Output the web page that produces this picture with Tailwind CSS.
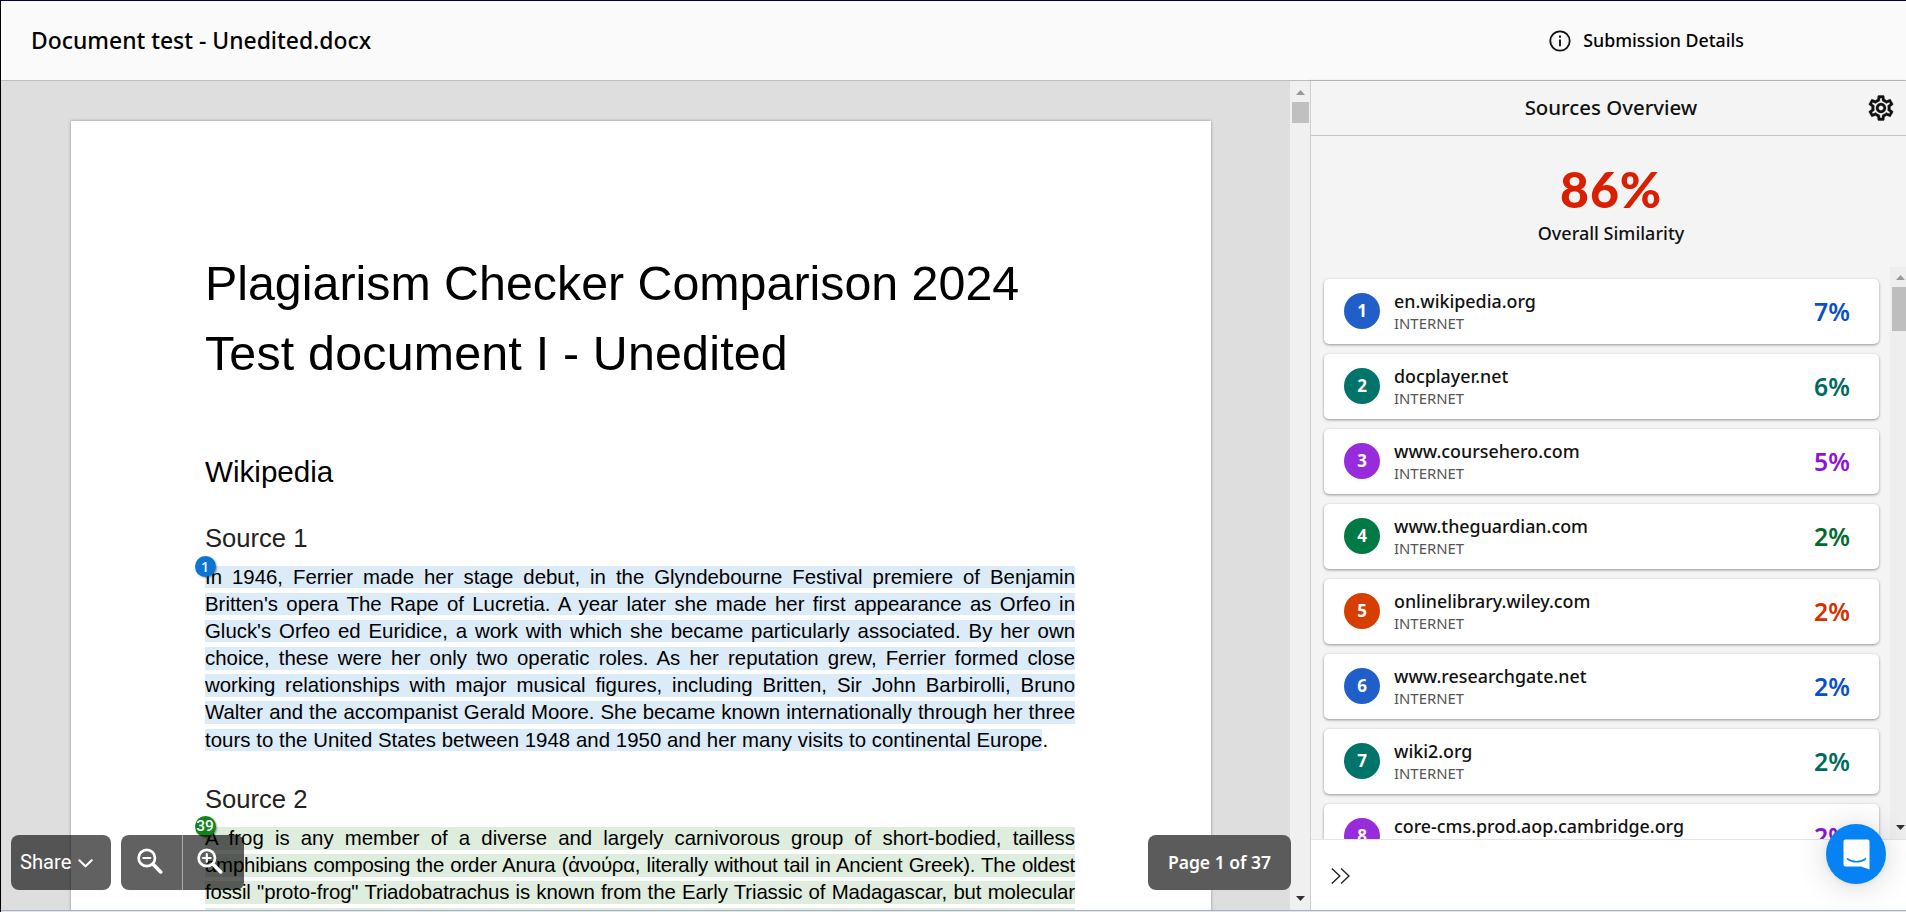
<!DOCTYPE html>
<html lang="en">
<head>
<meta charset="utf-8">
<title>Document test - Unedited.docx</title>
<script src="https://cdn.jsdelivr.net/npm/@tailwindcss/browser@4"></script>
</head>
<body class="h-screen overflow-hidden bg-[#fafafa] font-['Noto_Sans',sans-serif] text-[#111]">
<div class="flex h-[912px] w-[1906px] flex-col border-t border-l border-t-[#00003c] border-l-black">
  <header class="flex h-20 shrink-0 items-center justify-between border-b border-[#bdbdbd] bg-[#fafafa] pl-[30px] pr-[162px] text-black">
    <h1 class="pt-0.5 text-[22.9px] font-medium">Document test - Unedited.docx</h1>
    <div class="flex items-center gap-[12px]">
      <svg class="size-[22px]" viewBox="0 0 22 22" fill="none" stroke="#111"><circle cx="11" cy="11" r="9.7" stroke-width="1.8"/><path d="M11 9.6v6.6M11 5.6v2.2" stroke-width="1.9"/></svg>
      <span class="text-[17.8px] font-medium">Submission Details</span>
    </div>
  </header>

  <main class="flex h-[829px] shrink-0">
    <section class="relative flex w-[1309px] shrink-0 overflow-hidden bg-[#dedede]">
      <div class="w-[1289px] pl-[70px] pt-10">
        <article class="h-[900px] w-[1140px] bg-white pl-[134px] pr-[136px] pt-[127px] font-['Liberation_Sans',sans-serif] text-black shadow-[0_0_3px_rgba(0,0,0,0.35)]">
          <h2 class="whitespace-nowrap text-[48.35px] leading-[70px]">Plagiarism Checker Comparison 2024<br><span class="tracking-[0.2px]">Test document I - Unedited</span></h2>
          <h3 class="mt-[67px] text-[29.6px] leading-[34px]">Wikipedia</h3>
          <h4 class="mt-[34px] text-[25.6px] leading-[30px] text-[#222]">Source 1</h4>
          <div class="relative mt-[13px] flex flex-col gap-[4.8px] whitespace-nowrap text-[20.4px] leading-[22.3px]">
            <p class="bg-[#dbebf8] [text-align-last:justify]">In 1946, Ferrier made her stage debut, in the Glyndebourne Festival premiere of Benjamin</p>
            <p class="bg-[#dbebf8] [text-align-last:justify]">Britten's opera The Rape of Lucretia. A year later she made her first appearance as Orfeo in</p>
            <p class="bg-[#dbebf8] [text-align-last:justify]">Gluck's Orfeo ed Euridice, a work with which she became particularly associated. By her own</p>
            <p class="bg-[#dbebf8] [text-align-last:justify]">choice, these were her only two operatic roles. As her reputation grew, Ferrier formed close</p>
            <p class="bg-[#dbebf8] [text-align-last:justify]">working relationships with major musical figures, including Britten, Sir John Barbirolli, Bruno</p>
            <p class="bg-[#dbebf8] [text-align-last:justify]">Walter and the accompanist Gerald Moore. She became known internationally through her three</p>
            <p class="flex tracking-[0.035px]"><span class="bg-[#dbebf8]">tours to the United States between 1948 and 1950 and her many visits to continental Europe</span>.</p>
            <span class="absolute -left-[10.5px] -top-[10.5px] flex size-[21px] items-center justify-center rounded-full bg-[#0b75d1] font-['Noto_Sans',sans-serif] text-[15px] font-medium text-white shadow-[1px_1px_2px_rgba(0,0,0,0.4)]">1</span>
          </div>
          <h4 class="mt-[33px] text-[25.6px] leading-[30px] text-[#222]">Source 2</h4>
          <div class="relative mt-[13px] flex flex-col gap-[4.2px] whitespace-nowrap text-[20.4px] leading-[22.9px]">
            <p class="bg-[#dfedde] [text-align-last:justify]">A frog is any member of a diverse and largely carnivorous group of short-bodied, tailless</p>
            <p class="bg-[#dfedde] tracking-[-0.22px] [text-align-last:justify]">amphibians composing the order Anura (ἀνούρα, literally without tail in Ancient Greek). The oldest</p>
            <p class="bg-[#dfedde] tracking-[-0.12px] [text-align-last:justify]">fossil "proto-frog" Triadobatrachus is known from the Early Triassic of Madagascar, but molecular</p>
            <p class="h-5 bg-[#dfedde]"></p>
            <span class="absolute -left-[10.5px] -top-[10.5px] flex size-[21px] items-center justify-center rounded-full bg-[#12821a] font-[Roboto,sans-serif] text-[15.5px] font-medium text-white shadow-[1px_1px_2px_rgba(0,0,0,0.4)]">39</span>
          </div>
        </article>
      </div>

      <div class="absolute right-0 top-0 flex h-full w-5 flex-col items-center bg-[#f0f0f0]">
        <svg class="mt-[9px] h-[5px] w-[9px]" viewBox="0 0 9 5"><path d="M4.5 0 9 5H0z" fill="#999"/></svg>
        <div class="mt-[7px] h-[21px] w-[17px] bg-[#c0c0c0]"></div>
        <svg class="mb-[9px] mt-auto h-[5px] w-[9px]" viewBox="0 0 9 5"><path d="M4.5 5 9 0H0z" fill="#333"/></svg>
      </div>

      <div class="absolute bottom-5 left-2.5 flex h-[55px] w-[100px] items-center gap-[7px] rounded-[8px] bg-black/62 pl-[9px] text-white">
        <span class="font-[Roboto,sans-serif] text-[20.2px]">Share</span>
        <svg class="mt-0.5 h-[9px] w-[15px]" viewBox="0 0 15 9" fill="none" stroke="#fff" stroke-width="2.1" stroke-linecap="round" stroke-linejoin="round"><path d="m1.3 1.3 6.2 6 6.2-6"/></svg>
      </div>
      <div class="absolute bottom-5 left-[120px] flex h-[55px] w-[123px] rounded-[8px] bg-black/62">
        <div class="flex w-[62px] items-center border-r border-[#aaa] pb-[3px] pl-4">
          <svg class="size-[26px]" viewBox="0 0 26 26" fill="none" stroke="#fff" stroke-linecap="round"><circle cx="9.8" cy="10" r="8.2" stroke-width="2.7"/><path d="m16.3 16.5 7.4 7.4" stroke-width="3.6"/><path d="M6.3 10h7" stroke-width="2.2"/></svg>
        </div>
        <div class="flex w-[61px] items-center pb-[3px] pl-[14px]">
          <svg class="size-[26px]" viewBox="0 0 26 26" fill="none" stroke="#fff" stroke-linecap="round"><circle cx="9.8" cy="10" r="8.2" stroke-width="2.7"/><path d="m16.3 16.5 7.4 7.4" stroke-width="3.6"/><path d="M6 10h7.6M9.8 6.2v7.6" stroke-width="2.2"/></svg>
        </div>
      </div>
      <div class="absolute bottom-5 right-[19px] flex h-[55px] w-[143px] items-center justify-center rounded-[8px] bg-[#5b5b5b] text-[17.5px] font-semibold text-white">Page 1 of 37</div>
    </section>

    <aside class="flex w-[596px] flex-col border-l border-[#cfcfcf] bg-[#f4f4f4] shadow-[-1px_0_3px_rgba(0,0,0,0.15)]">
      <div class="relative flex h-[55px] shrink-0 items-center justify-center border-b border-[#c4c4c4] pb-0.5 pl-[5px]">
        <h2 class="text-[20.4px] font-medium">Sources Overview</h2>
        <svg class="absolute right-[10px] top-[12px] size-[30px]" viewBox="0 0 24 24" fill="#111" stroke="#111" stroke-width="0.3"><path d="M19.43 12.98c.04-.32.07-.64.07-.98s-.03-.66-.07-.98l2.11-1.65c.19-.15.24-.42.12-.64l-2-3.46c-.09-.16-.26-.25-.44-.25-.06 0-.12.01-.17.03l-2.49 1c-.52-.4-1.08-.73-1.69-.98l-.38-2.65C14.46 2.18 14.25 2 14 2h-4c-.25 0-.46.18-.49.42l-.38 2.65c-.61.25-1.17.59-1.69.98l-2.49-1c-.06-.02-.12-.03-.18-.03-.17 0-.34.09-.43.25l-2 3.46c-.13.22-.07.49.12.64l2.11 1.65c-.04.32-.07.65-.07.98s.03.66.07.98l-2.11 1.65c-.19.15-.24.42-.12.64l2 3.46c.09.16.26.25.44.25.06 0 .12-.01.17-.03l2.49-1c.52.4 1.08.73 1.69.98l.38 2.65c.03.24.24.42.49.42h4c.25 0 .46-.18.49-.42l.38-2.65c.61-.25 1.17-.59 1.69-.98l2.49 1c.06.02.12.03.18.03.17 0 .34-.09.43-.25l2-3.46c.12-.22.07-.49-.12-.64l-2.11-1.65zm-1.98-1.71c.04.31.05.52.05.73s-.02.43-.05.73l-.14 1.13.89.7 1.08.84-.7 1.21-1.27-.51-1.04-.42-.9.68c-.43.32-.84.56-1.25.73l-1.06.43-.16 1.13-.2 1.35h-1.4l-.19-1.35-.16-1.13-1.06-.43c-.43-.18-.83-.41-1.23-.71l-.91-.7-1.06.43-1.27.51-.7-1.21 1.08-.84.89-.7-.14-1.13c-.03-.31-.05-.54-.05-.74s.02-.43.05-.73l.14-1.13-.89-.7-1.08-.84.7-1.21 1.27.51 1.04.42.9-.68c.43-.32.84-.56 1.25-.73l1.06-.43.16-1.13.2-1.35h1.39l.19 1.35.16 1.13 1.06.43c.43.18.83.41 1.23.71l.91.7 1.06-.43 1.27-.51.7 1.21-1.07.85-.89.7.14 1.13zM12 8c-2.21 0-4 1.79-4 4s1.79 4 4 4 4-1.79 4-4-1.79-4-4-4zm0 6c-1.1 0-2-.9-2-2s.9-2 2-2 2 .9 2 2-.9 2-2 2z"/></svg>
      </div>
      <div class="flex h-[131px] shrink-0 flex-col items-center pl-[5px] pt-[24px]">
        <div class="font-[Lato,sans-serif] text-[50px] font-black leading-[58px] tracking-[0.8px] text-[#da1f00]">86%</div>
        <div class="mt-[3px] text-[18px] font-medium leading-6">Overall Similarity</div>
      </div>
      <div class="relative h-[573px] shrink-0 overflow-hidden border-b border-[#e4e4e4]">
        <ul id="sources" class="flex flex-col gap-2.5 pl-[13px] pt-3"></ul>
        <div class="absolute right-0 top-0 flex h-full w-4 flex-col bg-[#eeeeee]">
          <svg class="ml-1.5 mt-[8px] h-[5px] w-[9px] shrink-0" viewBox="0 0 9 5"><path d="M4.5 0 9 5H0z" fill="#999"/></svg>
          <div class="ml-0.5 mt-[7px] h-11 shrink-0 bg-[#bebebe]"></div>
          <svg class="mb-[9px] ml-1.5 mt-auto h-[5px] w-[9px] shrink-0" viewBox="0 0 9 5"><path d="M4.5 5 9 0H0z" fill="#333"/></svg>
        </div>
      </div>
      <div class="relative flex flex-1 items-center bg-white pl-[20px]">
        <svg class="mt-0.5 h-4 w-[19px]" viewBox="0 0 19 16" fill="none" stroke="#222" stroke-width="1.4"><path d="m.8.6 8 7.4-8 7.4M10 .6 18 8l-8 7.4"/></svg>
        <div class="absolute right-5 top-[-16px] flex size-[60px] items-center justify-center rounded-full bg-[#0582f3] shadow-[0_1px_6px_rgba(0,0,0,0.06),0_2px_32px_rgba(0,0,0,0.16)]">
          <svg class="h-[31px] w-[27px]" viewBox="0 0 27 31"><path d="M2.500.5h22a2 2 0 0 1 2 2v28l-8.500-3H2.500a2 2 0 0 1-2-2v-23a2 2 0 0 1 2-2z" fill="#fff"/><path d="M4.500 19.800c5 4 13 4 18 0" fill="none" stroke="#0582f3" stroke-width="1.500" stroke-linecap="round"/></svg>
        </div>
      </div>
    </aside>
  </main>
  <div class="flex-1 border-t border-[#a9b0bd] bg-[#e3e6f0]"></div>
</div>
<script>
const sources = [
  ['en.wikipedia.org', '7%', 'bg-[#205ec9]', 'text-[#0b4fc9]'],
  ['docplayer.net', '6%', 'bg-[#00746a]', 'text-[#006a60]'],
  ['www.coursehero.com', '5%', 'bg-[#982bdb]', 'text-[#8f13d3]'],
  ['www.theguardian.com', '2%', 'bg-[#007a45]', 'text-[#006b2d]'],
  ['onlinelibrary.wiley.com', '2%', 'bg-[#d63f00]', 'text-[#d62f00]'],
  ['www.researchgate.net', '2%', 'bg-[#205ec9]', 'text-[#0b4fc9]'],
  ['wiki2.org', '2%', 'bg-[#00746a]', 'text-[#006a60]'],
  ['core-cms.prod.aop.cambridge.org', '2%', 'bg-[#982bdb]', 'text-[#8f13d3]'],
];
document.getElementById('sources').innerHTML = sources.map(([name, pct, bg, fg], i) => `
  <li class="flex h-[65px] w-[555px] items-center rounded-[5px] bg-white pb-px pl-5 pr-[29px] shadow-[0_1px_3px_rgba(0,0,0,0.4)]">
    <span class="flex size-9 items-center justify-center rounded-full text-[17px] font-bold text-white ${bg}">${i + 1}</span>
    <div class="ml-3.5 flex-1">
      <div class="text-[17.85px] font-medium leading-6">${name}</div>
      <div class="text-[14.9px] leading-[21px] text-[#555]">INTERNET</div>
    </div>
    <span class="pt-px text-[24.8px] font-semibold ${fg}">${pct}</span>
  </li>`).join('');
</script>
</body>
</html>
